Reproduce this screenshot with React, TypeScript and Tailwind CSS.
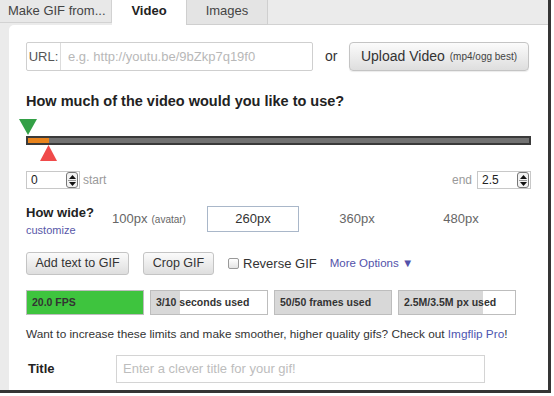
import React from "react";

function Spinner() {
  return (
    <div className="w-[12px] h-[16px] border border-[#777] rounded-[3px] bg-[#f2f2f2] flex flex-col items-center justify-center gap-[1px]">
      <svg width="7" height="4" viewBox="0 0 7 4"><polygon points="3.5,0 7,4 0,4" fill="#111" /></svg>
      <div className="w-[8px] h-px bg-[#999]" />
      <svg width="7" height="4" viewBox="0 0 7 4"><polygon points="0,0 7,0 3.5,4" fill="#111" /></svg>
    </div>
  );
}

function NumInput({ value }: { value: string }) {
  return (
    <div className="w-[54px] h-[18px] border border-[#c8c8c8] flex items-center justify-between pl-[4px] pr-px text-[12px] text-[#222]">
      <span>{value}</span>
      <Spinner />
    </div>
  );
}

function Stat({ label, pct, color }: { label: string; pct: number; color: string }) {
  return (
    <div className="relative w-[118px] h-[25px] border border-[#bdbdbd] bg-white overflow-hidden">
      <div className="absolute left-0 top-0 bottom-0" style={{ width: `${pct}%`, background: color }} />
      <div className="relative h-full flex items-center pl-[5px] text-[10.5px] font-bold text-[#333]">{label}</div>
    </div>
  );
}

export default function App() {
  return (
    <div className="w-[554px] h-[396px] bg-white overflow-hidden font-['Liberation_Sans',Arial,sans-serif]">
      <div className="w-[551px] h-[393px] border-r-[3px] border-b-[3px] border-[#353535] bg-[#ebebeb] flex flex-col">
        {/* tabs */}
        <div className="h-[25px] flex shrink-0">
          <div className="w-[112px] h-[23px] border-r border-b border-[#d2d2d2] bg-[#e8e8e8] flex items-center pl-[8px] text-[13px] text-[#444]">
            Make GIF from...
          </div>
          <div className="w-[74px] h-[25px] bg-white flex items-center justify-center pb-[3px] text-[13px] font-bold text-[#222]">
            Video
          </div>
          <div className="w-[82px] h-[25px] bg-[#e4e4e4] border-l border-r border-b border-[#cfcfcf] flex items-center justify-center pb-[3px] text-[13px] text-[#444]">
            Images
          </div>
          <div className="flex-1 h-[25px] border-b border-[#d2d2d2]" />
        </div>
        {/* panel */}
        <div className="flex-1 ml-[9px] bg-white rounded-tl-[5px] pl-[17px] pt-[17px] flex flex-col">
          {/* URL row */}
          <div className="flex items-center h-[29px]">
            <div className="w-[287px] h-[29px] border border-[#cfcfcf] rounded-[2px] flex items-center">
              <div className="w-[34px] h-full border-r border-[#dcdcdc] flex items-center justify-center text-[13px] text-[#555]">URL:</div>
              <div className="pl-[7px] text-[13px] text-[#b8b8b8]">e.g. http://youtu.be/9bZkp7q19f0</div>
            </div>
            <div className="ml-[12px] w-[24px] text-[14px] text-[#333]">or</div>
            <div className="w-[180px] h-[29px] border border-[#c4c4c4] rounded-[4px] bg-gradient-to-b from-[#fbfbfb] to-[#dedede] flex items-center justify-center gap-[5px] shadow-[0_1px_1px_rgba(0,0,0,0.08)]">
              <span className="text-[14px] text-[#333]">Upload Video</span>
              <span className="text-[10px] text-[#444]">(mp4/ogg best)</span>
            </div>
          </div>
          {/* heading */}
          <div className="mt-[22px] text-[14.5px] leading-[16px] font-bold text-[#222]">
            How much of the video would you like to use?
          </div>
          {/* slider */}
          <div className="relative mt-[10px] h-[43px] w-[505px]">
            <svg className="absolute left-[-7px] top-0" width="18" height="16" viewBox="0 0 18 16">
              <polygon points="0,0 18,0 9,16" fill="#33a046" />
            </svg>
            <div className="absolute left-0 top-[17px] w-[505px] h-[9px] border-2 border-[#3a3a3a] bg-[#727272]">
              <div className="w-[21px] h-full bg-[#e8831c]" />
            </div>
            <svg className="absolute left-[14px] top-[26px]" width="17" height="16" viewBox="0 0 17 16">
              <polygon points="8.5,0 17,16 0,16" fill="#f04a4a" />
            </svg>
          </div>
          {/* numbers */}
          <div className="mt-[9px] flex items-center w-[505px]">
            <NumInput value="0" />
            <span className="ml-[3px] text-[12px] text-[#9a9a9a]">start</span>
            <span className="ml-auto mr-[5px] text-[12px] text-[#9a9a9a]">end</span>
            <NumInput value="2.5" />
          </div>
          {/* how wide */}
          <div className="mt-[16px] flex items-start">
            <div className="w-[77px] flex flex-col">
              <div className="text-[13px] leading-[16px] font-bold text-[#222]">How wide?</div>
              <div className="mt-[2px] text-[11px] leading-[14px] text-[#5757a8]">customize</div>
            </div>
            <div className="flex gap-[12px] mt-px">
              <div className="w-[92px] h-[26px] flex items-center justify-center gap-[4px] text-[#666]">
                <span className="text-[13px]">100px</span>
                <span className="text-[10px]">(avatar)</span>
              </div>
              <div className="w-[92px] h-[26px] border border-[#a9b7c9] flex items-center justify-center text-[13px] text-[#333]">260px</div>
              <div className="w-[92px] h-[26px] flex items-center justify-center text-[13px] text-[#666]">360px</div>
              <div className="w-[92px] h-[26px] flex items-center justify-center text-[13px] text-[#666]">480px</div>
            </div>
          </div>
          {/* buttons */}
          <div className="mt-[15px] flex items-center h-[23px]">
            <div className="w-[103px] h-[23px] border border-[#c4c4c4] rounded-[3px] bg-gradient-to-b from-[#fbfbfb] to-[#dedede] flex items-center justify-center text-[12.5px] text-[#333]">Add text to GIF</div>
            <div className="ml-[14px] w-[71px] h-[23px] border border-[#c4c4c4] rounded-[3px] bg-gradient-to-b from-[#fbfbfb] to-[#dedede] flex items-center justify-center text-[12.5px] text-[#333]">Crop GIF</div>
            <div className="ml-[14px] w-[11px] h-[11px] border border-[#999] rounded-[2px] bg-gradient-to-b from-[#fff] to-[#e4e4e4]" />
            <span className="ml-[4px] text-[13px] text-[#333]">Reverse GIF</span>
            <span className="ml-[13px] text-[11.5px] text-[#5252aa]">More Options ▼</span>
          </div>
          {/* stats */}
          <div className="mt-[15px] flex gap-[6px]">
            <Stat label="20.0 FPS" pct={100} color="#3ec43e" />
            <Stat label="3/10 seconds used" pct={25} color="#d8d8d8" />
            <Stat label="50/50 frames used" pct={100} color="#d8d8d8" />
            <Stat label="2.5M/3.5M px used" pct={72} color="#d8d8d8" />
          </div>
          {/* info */}
          <div className="mt-[11px] text-[11.8px] leading-[16px] text-[#333]">
            Want to increase these limits and make smoother, higher quality gifs? Check out <span className="text-[#4d55b0]">Imgflip Pro</span>!
          </div>
          {/* title */}
          <div className="mt-[13px] flex items-center">
            <div className="w-[90px] pl-[2px] text-[13px] font-bold text-[#222]">Title</div>
            <div className="w-[369px] h-[28px] border border-[#d4d4d4] flex items-center pl-[6px] text-[13px] text-[#bdbdbd]">
              Enter a clever title for your gif!
            </div>
          </div>
        </div>
      </div>
    </div>
  );
}
